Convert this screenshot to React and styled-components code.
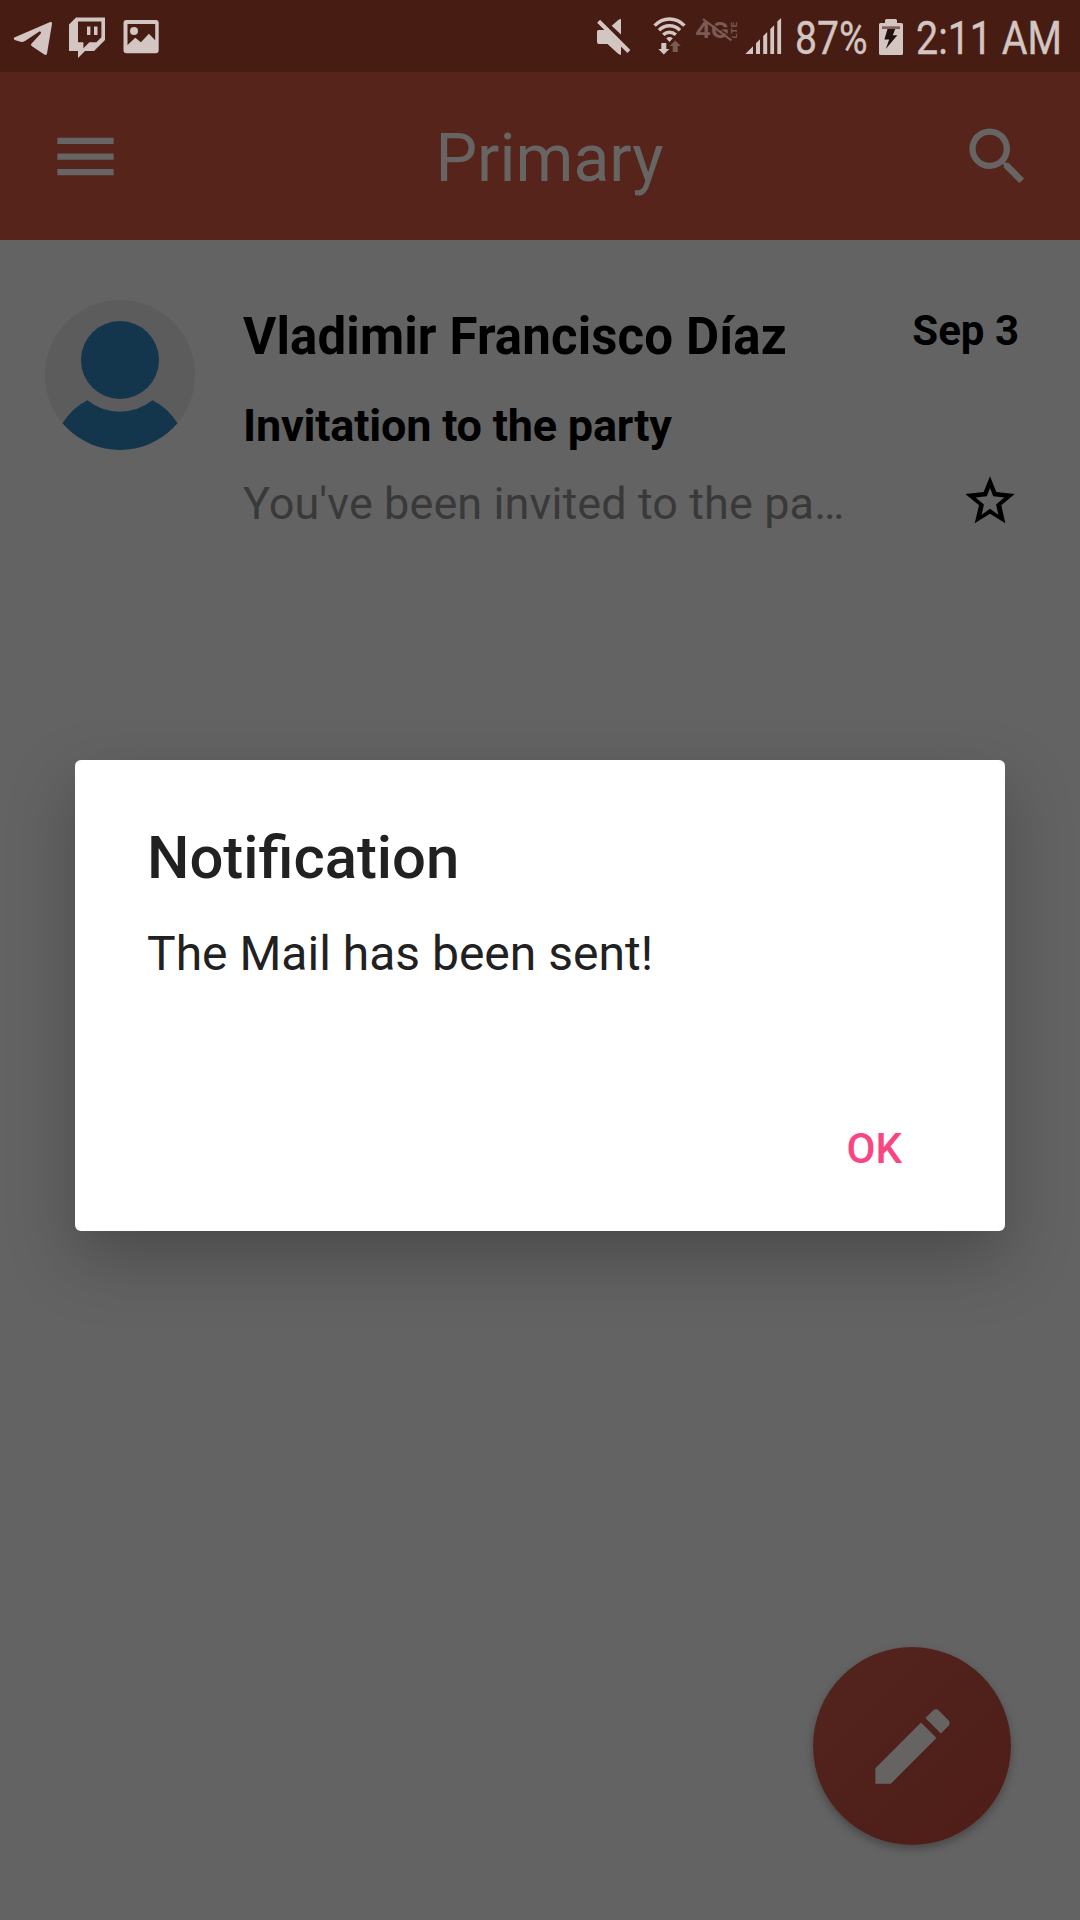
import React from "react";
import styled, { createGlobalStyle } from "styled-components";
import { MdMenu, MdSearch, MdEdit } from "react-icons/md";

const ink = "#d2c5c2";
const inkDim = "#7a5b54";

const GlobalStyle = createGlobalStyle`
  *, *::before, *::after { box-sizing: border-box; }
  html, body { margin: 0; padding: 0; background: #636363; }
  body { font-family: Roboto, "Noto Sans", sans-serif; }
`;

const Screen = styled.main`
  position: relative;
  display: flex;
  flex-direction: column;
  width: 1080px;
  height: 1920px;
  background: #636363;
  overflow: hidden;
`;

const StatusBar = styled.div`
  display: flex;
  justify-content: space-between;
  flex: none;
  height: 72px;
  padding: 0 12px 0 12px;
  background: #471c12;
`;

const StatusGroup = styled.div`
  display: flex;
  align-items: flex-start;
`;

const Glyph = styled.svg`
  display: block;
  flex: none;
  width: ${(p) => p.$w}px;
  height: 72px;
  margin-right: ${(p) => p.$gap || 0}px;
`;

const StatusText = styled.div`
  flex: none;
  width: ${(p) => p.$w}px;
  height: 72px;
  line-height: 77px;
  font-size: 46px;
  color: ${ink};
  -webkit-text-stroke: 0.4px ${ink};
  white-space: nowrap;
`;

const Condensed = styled.span`
  display: inline-block;
  transform: scaleX(${(p) => p.$ratio});
  transform-origin: left center;
`;

const AppBar = styled.header`
  display: flex;
  align-items: center;
  justify-content: space-between;
  flex: none;
  height: 168px;
  padding: 0 45px 0 48px;
  background: #56241b;
  color: #676564;
`;

const BarButton = styled.button`
  display: flex;
  padding: 0;
  border: 0;
  background: none;
  color: inherit;
  font-size: ${(p) => p.$size}px;
`;

const BarTitle = styled.h1`
  margin: 0;
  padding: 5px 0 0 16px;
  font-size: 66px;
  line-height: 80px;
  font-weight: 400;
`;

const MailRow = styled.article`
  display: flex;
  padding: 60px 61px 0 45px;
  color: #000;
`;

const Avatar = styled.svg`
  flex: none;
  width: 150px;
  height: 150px;
  border-radius: 50%;
`;

const MailBody = styled.div`
  flex: 1;
  min-width: 0;
  padding: 7px 0 0 48px;
`;

const Sender = styled.div`
  font-size: 51px;
  line-height: 60px;
  font-weight: 700;
  letter-spacing: 0.12px;
`;

const Subject = styled.div`
  margin-top: 32px;
  font-size: 45px;
  line-height: 54px;
  font-weight: 700;
  letter-spacing: -0.2px;
`;

const Preview = styled.div`
  margin-top: 24px;
  font-size: 45px;
  line-height: 54px;
  letter-spacing: 0.09px;
  color: #393939;
  white-space: nowrap;
`;

const MailMeta = styled.div`
  display: flex;
  flex-direction: column;
  align-items: flex-end;
  flex: none;
`;

const MailDate = styled.time`
  padding-top: 6px;
  font-size: 42px;
  line-height: 50px;
  font-weight: 700;
`;

const StarButton = styled(BarButton)`
  margin-top: 115px;
`;

const ComposeButton = styled.button`
  position: absolute;
  left: 813px;
  top: 1647px;
  display: flex;
  align-items: center;
  justify-content: center;
  width: 198px;
  height: 198px;
  padding: 0;
  border: 0;
  border-radius: 50%;
  background: linear-gradient(135deg, #53241d 10%, #50201a 50%, #4f1e18 90%);
  box-shadow: 0 4px 8px rgba(0, 0, 0, 0.28);
  color: #656463;
  font-size: 99px;
`;

const Overlay = styled.div`
  position: absolute;
  inset: 0;
  padding: 760px 75px 0;
`;

const Dialog = styled.section`
  display: flex;
  flex-direction: column;
  height: 471px;
  padding: 63px 72px 0;
  border-radius: 6px;
  background: #fff;
  color: #212121;
  box-shadow: 0 27px 66px rgba(0, 0, 0, 0.25);
`;

const DialogTitle = styled.h2`
  margin: 0;
  font-size: 59.8px;
  line-height: 70px;
  font-weight: 500;
`;

const DialogText = styled.p`
  margin: 33px 0 0;
  font-size: 48px;
  line-height: 56px;
`;

const DialogActions = styled.div`
  display: flex;
  justify-content: flex-end;
  margin-top: 142px;
  padding-right: 31px;
`;

const DialogButton = styled.button`
  padding: 0;
  border: 0;
  background: none;
  color: #fa4583;
  font: 500 42px/50px Roboto, "Noto Sans", sans-serif;
`;

function TelegramIcon() {
  return (
    <Glyph $w={42} $gap={14} viewBox="12 0 42 72" fill={ink}>
      <path d="M14.3 37.6 50.2 22.1Q52.4 21.4 52 24L47 53.4Q46.4 55.8 44.3 54.6L31.6 46Q30.4 45 31.4 43.7L40.8 33.6Q41.8 31.2 39.3 31.6L25 41Q22.6 42.3 20.4 41.8L14.6 40.1Q13 39 14.3 37.6Z" />
    </Glyph>
  );
}

function TwitchIcon() {
  return (
    <Glyph $w={40} $gap={14} viewBox="68 0 40 72" fill={ink}>
      <path
        fillRule="evenodd"
        d="M76 17.4h29V40L94 51h-9l-7 7v-7h-9V24.5ZM78 21.6v20.7h5.4v6l6-6h7l5-5V21.6Z"
      />
      <path d="M87 26.4h3.4V35H87zM94 26.4h3.5V35H94z" />
    </Glyph>
  );
}

function PictureIcon() {
  return (
    <Glyph $w={40} viewBox="122 0 40 72" fill={ink}>
      <path
        fillRule="evenodd"
        d="M126.5 20h29.2a3 3 0 0 1 3 3v27.2a3 3 0 0 1-3 3h-29.2a3 3 0 0 1-3-3V23a3 3 0 0 1 3-3ZM127.5 24v21l7.8-7.2 5.6 4.4 8-8.4 6.3 6.4V24Z"
      />
      <circle cx="134" cy="31" r="4" />
    </Glyph>
  );
}

function MuteIcon() {
  return (
    <Glyph $w={36} $gap={21} viewBox="596 0 36 72" fill={ink}>
      <path d="M597 31.5q0-1.5 1.5-1.5H605l16 16v9q-2-.2-4-2.2l-9.5-8.8H599q-2 0-2-2Z" />
      <path d="M621 19v15.6l-9.3-8.8 6.3-5.6Q619.6 19 621 19Z" />
      <path d="M598.6 21.2 628.9 51.6" stroke={ink} strokeWidth="4.2" />
    </Glyph>
  );
}

function WifiIcon() {
  return (
    <Glyph $w={38} $gap={4} viewBox="653 0 38 72" fill="none" stroke={ink} strokeWidth="3.5">
      <path d="M654.6 25.6Q661 19 669.5 19T684.4 25.6" />
      <path d="M659 30.2Q663.5 25.8 669.5 25.8T680 30.2" />
      <path d="M663.2 34.8Q666 32.2 669.5 32.2T675.8 34.8" />
      <path d="M666.2 38.2Q669.5 35.6 672.8 38.2L669.5 42Z" fill={ink} stroke="none" />
      <path d="M661.3 43h5v6h3l-5.5 5.4-5.5-5.4h3Z" fill={ink} stroke="none" />
      <path d="M672.7 52v-6h-3l5.6-5.4 5.5 5.4h-3v6Z" fill={inkDim} stroke="none" />
    </Glyph>
  );
}

function NetworkIcon() {
  return (
    <Glyph $w={44} $gap={5} viewBox="695 0 44 72" fill={inkDim} fontFamily="Inter, sans-serif" fontWeight="700">
      <text x="695" y="38" fontSize="22" textLength="34" lengthAdjust="spacingAndGlyphs">4G</text>
      <text transform="translate(737 38.6) rotate(-90)" fontSize="8" textLength="17" lengthAdjust="spacingAndGlyphs">LTE</text>
      <path d="M704.4 17.6 733 38.8" stroke="#471c12" strokeWidth="1.2" />
      <path d="M703 19.2 731.4 40.4" stroke={inkDim} strokeWidth="2.2" />
    </Glyph>
  );
}

function SignalIcon() {
  return (
    <Glyph $w={38} $gap={13} viewBox="744 0 38 72" fill={ink}>
      <path d="M745.3 54 753 46.3V54ZM756 54V43.3l4-4V54ZM763.2 54V36l4-4V54ZM770.3 54V29l3.8-3.8V54ZM777.3 54V21.6l3.8-3.6V54Z" />
    </Glyph>
  );
}

function BatteryIcon() {
  return (
    <Glyph $w={26} $gap={11} viewBox="879 0 26 72" fill={ink}>
      <path d="M886.5 19h9q1.5 0 1.5 1.5V23h4.5q1.5 0 1.5 1.5v29q0 1.5-1.5 1.5h-21q-1.5 0-1.5-1.5v-29q0-1.5 1.5-1.5h4.5v-2.5q0-1.5 1.5-1.5Z" />
      <path d="M882 26.3h18V29h-18Z" fill="#806059" />
      <path d="M887.5 29h7.7l-2.4 6.2h4.5L885.8 49l3.4-9.6h-4.8Z" fill="#21120d" />
    </Glyph>
  );
}

function StarIcon() {
  return (
    <svg width="59" height="59" viewBox="240 543 177 177" fill="currentColor">
      <path
        fillRule="evenodd"
        d="M330 559 349 606 404 612 364 646 376 700 330 671 284 700 297 646 256 612 311 606ZM330 594 320.4 619 287 622.5 311.7 643.5 305 674 330 656 355 674 348.3 643.5 373 622.5 339.6 619Z"
      />
    </svg>
  );
}

export default function App() {
  return (
    <>
      <GlobalStyle />
      <Screen>
        <StatusBar>
          <StatusGroup>
            <TelegramIcon />
            <TwitchIcon />
            <PictureIcon />
          </StatusGroup>
          <StatusGroup>
            <MuteIcon />
            <WifiIcon />
            <NetworkIcon />
            <SignalIcon />
            <StatusText $w={84}>
              <Condensed $ratio={0.85}>87%</Condensed>
            </StatusText>
            <BatteryIcon />
            <StatusText $w={152}>
              <Condensed $ratio={0.857}>2:11 AM</Condensed>
            </StatusText>
          </StatusGroup>
        </StatusBar>

        <AppBar>
          <BarButton $size={75} aria-label="Menu">
            <MdMenu />
          </BarButton>
          <BarTitle>Primary</BarTitle>
          <BarButton $size={75} aria-label="Search">
            <MdSearch />
          </BarButton>
        </AppBar>

        <MailRow>
          <Avatar viewBox="0 0 150 150">
            <rect width="150" height="150" fill="#5c5c5c" />
            <circle cx="75" cy="60" r="39" fill="#14364d" />
            <path
              d="M42.4 100.3A52 52 0 0 0 107.4 100.3Q122 107 133 124V150H17V124Q28 107 42.4 100.3Z"
              fill="#14364d"
            />
          </Avatar>
          <MailBody>
            <Sender>Vladimir Francisco Díaz</Sender>
            <Subject>Invitation to the party</Subject>
            <Preview>You've been invited to the pa…</Preview>
          </MailBody>
          <MailMeta>
            <MailDate>Sep 3</MailDate>
            <StarButton aria-label="Star">
              <StarIcon />
            </StarButton>
          </MailMeta>
        </MailRow>

        <ComposeButton aria-label="Compose">
          <MdEdit />
        </ComposeButton>

        <Overlay>
          <Dialog role="dialog">
            <DialogTitle>Notification</DialogTitle>
            <DialogText>The Mail has been sent!</DialogText>
            <DialogActions>
              <DialogButton>OK</DialogButton>
            </DialogActions>
          </Dialog>
        </Overlay>
      </Screen>
    </>
  );
}
